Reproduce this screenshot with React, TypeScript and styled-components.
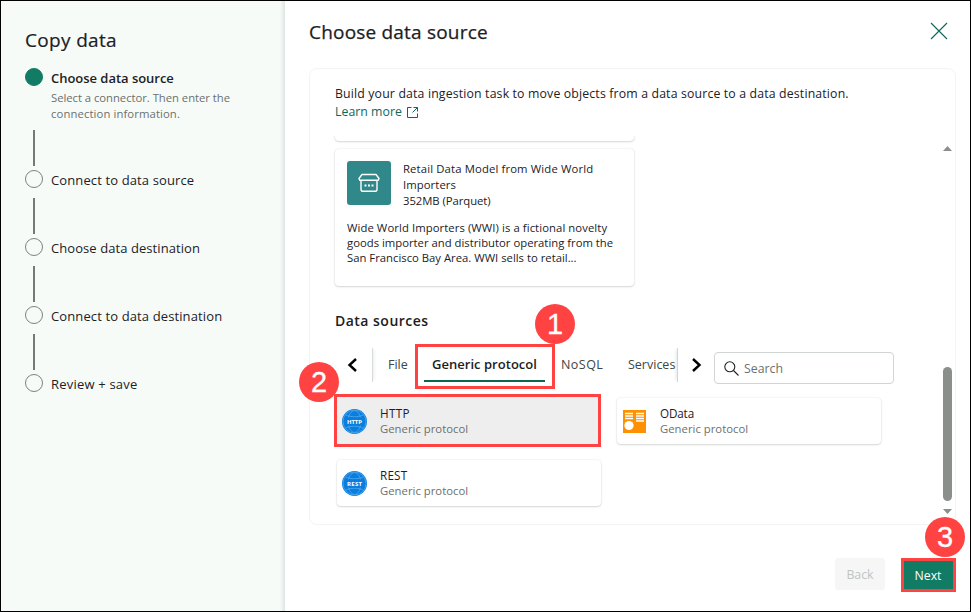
import React from 'react';
import styled, { createGlobalStyle, css } from 'styled-components';

const Global = createGlobalStyle`
  *, *::before, *::after { box-sizing: border-box; }
  body { margin: 0; font-family: "Open Sans", "Noto Sans", sans-serif; color: #1c211f; }
`;

const red = '#ff4343';
const cardShadow = '0 0 2px rgba(40, 60, 55, 0.12), 0 1px 2px rgba(40, 60, 55, 0.17)';

const Frame = styled.div`
  display: flex;
  width: 971px;
  height: 612px;
  overflow: hidden;
  border: 1px solid #000;
  background: #fff;
`;

const Sidebar = styled.aside`
  width: 284px;
  flex: none;
  padding: 26px 0 0 24px;
  background: linear-gradient(to right, transparent 279px, #dfe5e2 284px), #f7fbf8;
`;

const SideTitle = styled.h1`
  margin: 0;
  height: 41px;
  font-size: 19px;
  line-height: 27px;
  font-weight: 400;
  letter-spacing: 0.33px;
  -webkit-text-stroke: 0.2px currentColor;
`;

const Step = styled.div<{ $tall?: boolean }>`
  display: flex;
  gap: 8px;
  height: ${(p) => (p.$tall ? 102 : 68)}px;
`;

const Rail = styled.div`
  display: flex;
  flex-direction: column;
  align-items: center;
  justify-content: space-between;
  width: 18px;
  padding-bottom: 4px;
`;

const Dot = styled.span<{ $on?: boolean }>`
  width: 18px;
  height: 18px;
  border-radius: 50%;
  border: 1px solid ${(p) => (p.$on ? '#117b63' : '#7d8280')};
  background: ${(p) => (p.$on ? '#117b63' : 'transparent')};
`;

const Line = styled.span`
  width: 2px;
  height: 36px;
  background: #757977;
`;

const StepLabel = styled.div<{ $on?: boolean; $ls: number }>`
  padding-top: 1px;
  font-size: 13px;
  line-height: 19px;
  white-space: nowrap;
  font-weight: ${(p) => (p.$on ? 600 : 400)};
  letter-spacing: ${(p) => p.$ls}px;
`;

const StepHints = styled.div`
  padding-top: 2px;
`;

const StepHint = styled.div<{ $ls: number }>`
  color: #6b706e;
  font-size: 11.3px;
  line-height: 16px;
  font-weight: 400;
  letter-spacing: ${(p) => p.$ls}px;
`;

const Main = styled.main`
  flex: 1;
  min-width: 0;
  padding: 0 14px 0 24px;
  display: flex;
  flex-direction: column;
`;

const Header = styled.header`
  display: flex;
  justify-content: space-between;
  height: 67px;
  padding: 18px 8px 0 0;
  svg { margin-top: 3px; }
`;

const Title = styled.h2`
  margin: 0;
  font-size: 19px;
  line-height: 27px;
  font-weight: 400;
  letter-spacing: 0.2px;
  -webkit-text-stroke: 0.25px currentColor;
`;

const Panel = styled.section`
  height: 457px;
  border: 1px solid #f3f5f4;
  border-radius: 8px;
  padding: 16px 3px 0 25px;
`;

const Intro = styled.div`
  height: 51px;
  font-size: 12.3px;
  line-height: 18px;
  letter-spacing: 0.15px;
  white-space: nowrap;
`;

const Learn = styled.a`
  display: flex;
  align-items: center;
  gap: 4px;
  color: #0c695a;
  letter-spacing: 0.03px;
`;

const Scroller = styled.div`
  display: flex;
  justify-content: space-between;
  height: 387px;
`;

const Content = styled.div`
  width: 562px;
  overflow: hidden;
  padding-left: 2px;
  margin-left: -2px;
`;

const CardTail = styled.div`
  width: 299px;
  height: 41px;
  margin-top: -36px;
  border-radius: 4px;
  box-shadow: ${cardShadow};
`;

const SampleCard = styled.article`
  width: 299px;
  height: 137px;
  margin-top: 8px;
  padding: 12px;
  border-radius: 4px;
  box-shadow: ${cardShadow};
`;

const SampleHead = styled.div`
  display: flex;
  gap: 12px;
  height: 59px;
`;

const Tile = styled.div`
  display: flex;
  align-items: center;
  justify-content: center;
  width: 44px;
  height: 44px;
  border-radius: 3px;
  background: #31888a;
`;

const TextLine = styled.div<{ $lh: number; $ls?: number }>`
  font-size: 11.3px;
  line-height: ${(p) => p.$lh}px;
  white-space: nowrap;
  letter-spacing: ${(p) => p.$ls ?? 0}px;
`;

const SectionTitle = styled.h3`
  margin: 24px 0 0;
  font-size: 14px;
  line-height: 22px;
  font-weight: 600;
  letter-spacing: 0.48px;
`;

const Toolbar = styled.div`
  display: flex;
  height: 52px;
  margin-top: 12px;
`;

const NavArrow = styled.div<{ $side: 'left' | 'right' }>`
  display: flex;
  align-items: center;
  justify-content: center;
  height: 34px;
  margin-top: 4px;
  ${(p) =>
    p.$side === 'left'
      ? css`
          width: 38px;
          padding-right: 3px;
          border-right: 1px solid #d8dcda;
          box-shadow: 3px 0 3px -2px rgba(40, 60, 55, 0.1);
        `
      : css`
          width: 36px;
          padding-left: 2px;
          border-left: 1px solid #d0d4d2;
          box-shadow: -3px 0 3px -2px rgba(40, 60, 55, 0.12);
        `}
`;

const Tabs = styled.div`
  display: flex;
  width: 304px;
  height: 44px;
`;

const Tab = styled.div<{ $w: number; $ls?: number; $indent?: number }>`
  flex: none;
  width: ${(p) => p.$w}px;
  padding-left: ${(p) => p.$indent ?? 0}px;
  font-size: 12.5px;
  line-height: 42px;
  color: #404644;
  white-space: nowrap;
  letter-spacing: ${(p) => p.$ls ?? 0}px;
`;

const ActiveTab = styled.div`
  flex: none;
  width: 140px;
  height: 45px;
  padding: 0 6px;
  margin-right: 6px;
  border: 3px solid ${red};
  font-size: 13px;
  font-weight: 600;
  line-height: 34px;
  text-align: center;
  letter-spacing: 0.03px;
  white-space: nowrap;
`;

const ActiveLabel = styled.span`
  display: block;
  height: 35px;
  margin-right: 1px;
  border-bottom: 2px solid #0b6652;
`;

const SearchBox = styled.div`
  display: flex;
  align-items: center;
  gap: 5px;
  width: 180px;
  height: 32px;
  margin: 8px 0 0 1px;
  padding-left: 9px;
  border: 1px solid #d0d4d2;
  border-radius: 4px;
  color: #6b706e;
  font-size: 12.3px;
`;

const Grid = styled.div`
  display: grid;
  grid-template-columns: 264px 264px;
  gap: 16px;
  padding: 2px 0 0 2px;
`;

const Connector = styled.div<{ $selected?: boolean }>`
  position: relative;
  display: flex;
  align-items: center;
  gap: 13px;
  height: 46px;
  padding-left: 5px;
  border-radius: ${(p) => (p.$selected ? 0 : 4)}px;
  box-shadow: ${(p) => (p.$selected ? 'none' : cardShadow)};
  background: ${(p) => (p.$selected ? '#eeeeee' : '#fff')};
  ${(p) =>
    p.$selected &&
    css`
      &::before {
        content: '';
        position: absolute;
        inset: -4px 0 -3px -3px;
        border: 3px solid ${red};
        box-shadow: inset 0 1px 0 #eeeeee;
      }
    `}
`;

const ConnectorName = styled.div<{ $ls: number }>`
  font-size: 11.7px;
  line-height: 16px;
  letter-spacing: ${(p) => p.$ls}px;
`;

const ConnectorKind = styled.div`
  font-size: 11.3px;
  line-height: 16px;
  letter-spacing: 0.02px;
  color: #6b706e;
`;

const Track = styled.div`
  display: flex;
  flex-direction: column;
  align-items: center;
  width: 9px;
  padding-top: 10px;
`;

const Thumb = styled.div`
  width: 9px;
  height: 134px;
  margin: 216px 0 8px;
  border-radius: 5px;
  background: #8a8f8b;
`;

const Footer = styled.footer`
  display: flex;
  justify-content: flex-end;
  gap: 16px;
  padding-top: 33px;
`;

const Button = styled.button<{ $primary?: boolean }>`
  width: ${(p) => (p.$primary ? 55 : 50)}px;
  height: ${(p) => (p.$primary ? 34 : 32)}px;
  padding: ${(p) => (p.$primary ? '1px 1px 0 0' : '2px 0 0')};
  font: 400 12.3px/20px "Open Sans", sans-serif;
  border: ${(p) => (p.$primary ? `3px solid ${red}` : '0')};
  border-radius: ${(p) => (p.$primary ? 0 : 3)}px;
  background: ${(p) => (p.$primary ? '#117b63' : '#f6f6f6')};
  color: ${(p) => (p.$primary ? '#fff' : '#c0c4c2')};
`;

const Badge = styled.span<{ $x: number; $y: number }>`
  position: absolute;
  left: ${(p) => p.$x}px;
  top: ${(p) => p.$y}px;
  width: 40px;
  height: 40px;
  border-radius: 50%;
  background: ${red};
  color: #fff;
  font: 400 29px/41px "Liberation Sans", Arial, sans-serif;
  -webkit-text-stroke: 0.3px #fff;
  text-align: center;
`;

const CloseIcon = () => (
  <svg width="18" height="18" viewBox="0 0 18 18" stroke="#0c695a" strokeWidth="1.1">
    <path d="M1 1l16 16M17 1L1 17" />
  </svg>
);

const OpenIcon = () => (
  <svg width="13" height="13" viewBox="0 0 13 13" fill="none" stroke="#0c695a">
    <path d="M5.500 1.500h-4v10h10v-4M7.500 1.500h4v4M11.500 1.500L6.500 6.500" />
  </svg>
);

const StoreIcon = () => (
  <svg width="24" height="22" viewBox="0 0 24 22" fill="none" stroke="#fff" strokeWidth="1.4" strokeLinejoin="round">
    <path d="M5 2.500h14l3 4-.7 1.800H2.700L2 6.500z M4 8.500v9.500l1 1.200h14l1-1.200V8.500" />
    <path d="M7.500 13.500h2M11 13.500h2M14.500 13.500h2" strokeWidth="2" />
  </svg>
);

const Chevron = ({ right }: { right?: boolean }) => (
  <svg width="12" height="16" viewBox="0 0 12 16" fill="none" stroke="#000" strokeWidth="2.4">
    <path d={right ? 'M2 2l6.500 6L2 14' : 'M10 2L3.500 8l6.500 6'} />
  </svg>
);

const SearchIcon = () => (
  <svg width="15" height="15" viewBox="0 0 15 15" fill="none" stroke="#1c211f" strokeWidth="1.1">
    <circle cx="5.800" cy="5.800" r="5" />
    <path d="M9.500 9.500l5 5" />
  </svg>
);

const GlobeIcon = ({ label }: { label: string }) => (
  <svg width="25" height="25" viewBox="0 0 25 25">
    <circle cx="12.500" cy="12.500" r="12.500" fill="#0a7ddd" />
    <g fill="none" stroke="#4ba6ea" strokeWidth="0.9">
      <circle cx="12.500" cy="12.500" r="11.500" />
      <path d="M6.500 8.500C7.500 4.500 9.500 2 12.500 1.500c3 .5 5 3 6 7M6.500 16.500c1 4 3 6.500 6 7 3-.5 5-3 6-7M4 6c4 2.300 13 2.300 17 0M4 19c4-2.300 13-2.300 17 0" />
    </g>
    <rect x="3" y="8.800" width="19" height="7.400" fill="#0a7ddd" />
    <text x="12.500" y="14.800" fill="#fff" fontSize="6" fontWeight="700" textAnchor="middle" textLength="15" fontFamily="Open Sans, sans-serif">
      {label}
    </text>
  </svg>
);

const ODataIcon = () => (
  <svg width="25" height="25" viewBox="0 0 25 25">
    <rect x="1" y="1" width="23" height="23" fill="#ff9100" />
    <path d="M3 4.500h8M3 7h8M3 9.500h8M14 4.500h8M14 7h8M14 9.500h8M14 12h8" stroke="#fff" strokeWidth="1.500" />
    <circle cx="7" cy="16.500" r="4.600" fill="#fff" />
  </svg>
);

const Triangle = ({ down }: { down?: boolean }) => (
  <svg width="9" height="5" viewBox="0 0 9 5" fill="#8a8f8b">
    <path d={down ? 'M0 0h9L4.500 5z' : 'M0 5h9L4.500 0z'} />
  </svg>
);

const steps = [
  { label: 'Connect to data source', ls: 0.12 },
  { label: 'Choose data destination', ls: 0.07 },
  { label: 'Connect to data destination', ls: 0.12 },
  { label: 'Review + save', ls: 0.2 },
];

export default function App() {
  return (
    <Frame>
      <Global />
      <Sidebar>
        <SideTitle>Copy data</SideTitle>
        <Step $tall>
          <Rail><Dot $on /><Line /></Rail>
          <StepLabel $on $ls={-0.03}>
            Choose data source
            <StepHints>
              <StepHint $ls={-0.04}>Select a connector. Then enter the</StepHint>
              <StepHint $ls={0.1}>connection information.</StepHint>
            </StepHints>
          </StepLabel>
        </Step>
        {steps.map((s, i) => (
          <Step key={s.label}>
            <Rail><Dot />{i < steps.length - 1 && <Line />}</Rail>
            <StepLabel $ls={s.ls}>{s.label}</StepLabel>
          </Step>
        ))}
      </Sidebar>
      <Main>
        <Header>
          <Title>Choose data source</Title>
          <CloseIcon />
        </Header>
        <Panel>
          <Intro>
            Build your data ingestion task to move objects from a data source to a data destination.
            <Learn>Learn more <OpenIcon /></Learn>
          </Intro>
          <Scroller>
            <Content>
              <CardTail />
              <SampleCard>
                <SampleHead>
                  <Tile><StoreIcon /></Tile>
                  <div>
                    <TextLine $lh={16} $ls={0.14}>Retail Data Model from Wide World</TextLine>
                    <TextLine $lh={16} $ls={0.07}>Importers</TextLine>
                    <TextLine $lh={16} $ls={-0.05}>352MB (Parquet)</TextLine>
                  </div>
                </SampleHead>
                <TextLine $lh={15} $ls={0.08}>Wide World Importers (WWI) is a fictional novelty</TextLine>
                <TextLine $lh={15}>goods importer and distributor operating from the</TextLine>
                <TextLine $lh={15}>San Francisco Bay Area. WWI sells to retail...</TextLine>
              </SampleCard>
              <SectionTitle>Data sources</SectionTitle>
              <Toolbar>
                <NavArrow $side="left"><Chevron /></NavArrow>
                <Tabs>
                  <Tab $w={42} $indent={15}>File</Tab>
                  <ActiveTab><ActiveLabel>Generic protocol</ActiveLabel></ActiveTab>
                  <Tab $w={67} $ls={0.45}>NoSQL</Tab>
                  <Tab $w={49}>Services</Tab>
                </Tabs>
                <NavArrow $side="right"><Chevron right /></NavArrow>
                <SearchBox><SearchIcon />Search</SearchBox>
              </Toolbar>
              <Grid>
                <Connector $selected>
                  <GlobeIcon label="HTTP" />
                  <div><ConnectorName $ls={0.3}>HTTP</ConnectorName><ConnectorKind>Generic protocol</ConnectorKind></div>
                </Connector>
                <Connector>
                  <ODataIcon />
                  <div><ConnectorName $ls={-0.15}>OData</ConnectorName><ConnectorKind>Generic protocol</ConnectorKind></div>
                </Connector>
                <Connector>
                  <GlobeIcon label="REST" />
                  <div><ConnectorName $ls={0.2}>REST</ConnectorName><ConnectorKind>Generic protocol</ConnectorKind></div>
                </Connector>
              </Grid>
            </Content>
            <Track><Triangle /><Thumb /><Triangle down /></Track>
          </Scroller>
        </Panel>
        <Footer>
          <Button>Back</Button>
          <Button $primary>Next</Button>
        </Footer>
      </Main>
      <Badge $x={535} $y={304}>1</Badge>
      <Badge $x={299} $y={362}>2</Badge>
      <Badge $x={925} $y={517}>3</Badge>
    </Frame>
  );
}
